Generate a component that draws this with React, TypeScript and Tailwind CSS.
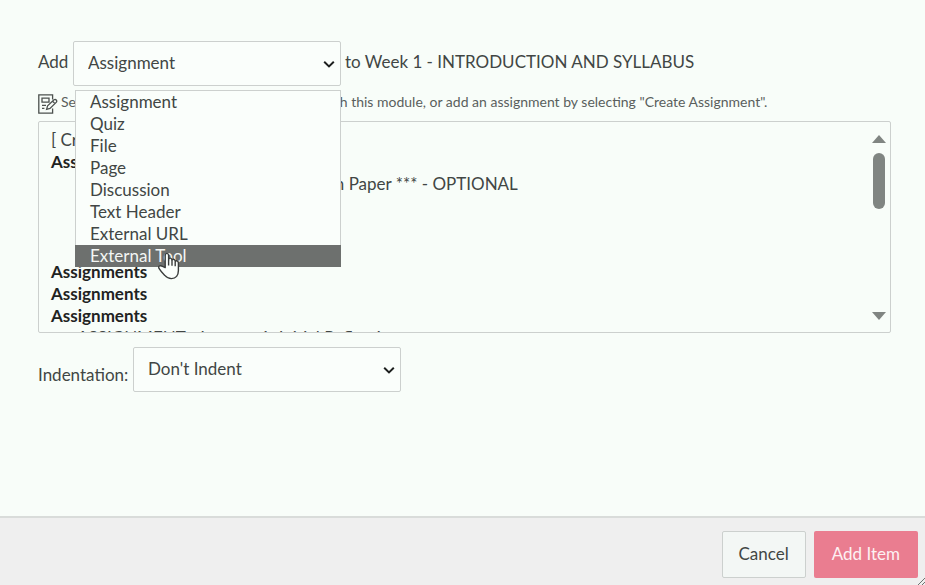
import { useState } from "react";

const itemTypes = [
  "Assignment",
  "Quiz",
  "File",
  "Page",
  "Discussion",
  "Text Header",
  "External URL",
  "External Tool",
];

const indents = ["Don't Indent", "Indent 1 Level", "Indent 2 Levels", "Indent 3 Levels"];

// Mock data for the assignment groups of the course
const groups = [
  {
    id: "group1",
    assignments: [
      "*** Extra Credit: Academic Research Paper *** - OPTIONAL",
      "Reading Response 1",
      "Reading Response 2",
      "Reading Response 3",
    ],
  },
  { id: "group2", assignments: [] },
  { id: "group3", assignments: [] },
  { id: "group4", assignments: ["ASSIGNMENT - Lecture 1: Initial Reflection"] },
];

function Chevron() {
  return (
    <svg
      className="pointer-events-none absolute right-1.5 top-1/2 h-3 w-3 -translate-y-1/2"
      viewBox="0 0 12 12"
      fill="none"
      stroke="#1c1f1e"
      strokeWidth="2"
      aria-hidden="true"
    >
      <path d="M1.2 3.8 L6 8.4 L10.8 3.8" />
    </svg>
  );
}

function AssignmentIcon() {
  return (
    <svg className="h-5 w-5 shrink-0" viewBox="0 0 20 20" fill="none" stroke="#4b504e" strokeWidth="1.3" aria-hidden="true">
      <path d="M14.6 5.4 V0.8 H0.8 V19.2 H14.6 V14.6" />
      <path d="M4 4.2 H11 V8.2 H4 Z M4 11.4 H8 M4 14.4 H6.4" />
      <path d="M8.6 15.4 L9.6 11.8 L16 5.8 Q17.4 5 18.4 6.2 Q19.2 7.4 18.2 8.4 L12 14.4 Z M14.6 7.2 L17 9.6" />
    </svg>
  );
}

function HandCursor() {
  return (
    <svg
      className="pointer-events-none absolute bottom-[-13px] left-[82px] h-7 w-6"
      viewBox="0 0 24 28"
      fill="#fbfffc"
      stroke="#3a3d3c"
      strokeWidth="1.4"
      strokeLinejoin="round"
      aria-hidden="true"
    >
      <path d="M8.2 15.6 V3.4 Q8.3 1.4 9.9 1.4 Q11.4 1.4 11.6 3.4 V8 Q11.8 6 13.4 6.1 Q14.9 6.3 15 8.4 Q15.4 7 16.7 7.2 Q18.2 7.4 18.2 9.6 Q18.8 8.5 20 8.8 Q21.4 9.3 21.4 11.2 V18.4 Q21.4 22 19.6 24.4 Q17.8 26.6 14.4 26.6 Q10.6 26.6 7.8 23.4 Q4.2 20 2 16.4 Q1.2 14.4 2.6 13.8 Q4 13.4 5.6 14.4 Z" />
      <path d="M11.6 8 V13.4 M15 8.6 V13.8 M18.2 10 V14.2" fill="none" />
    </svg>
  );
}

export default function App() {
  const [type, setType] = useState("Assignment");
  const [active, setActive] = useState("External Tool");
  const [open, setOpen] = useState(true);

  const pick = (name: string) => {
    setType(name);
    setOpen(false);
  };

  return (
    <form
      className="flex min-h-screen flex-col bg-[#f8fdf9] font-['Lato',sans-serif] text-[17px] leading-[22px] text-[#414644]"
      onSubmit={(e) => e.preventDefault()}
    >
      <main className="flex-1 pl-[38px] pr-[34px] pt-[41px]">
        <div className="flex items-center">
          <label htmlFor="item-type" className="w-[35px] shrink-0 pb-1">
            Add
          </label>
          <div className="relative w-[268px] shrink-0">
            <select
              id="item-type"
              value={type}
              onChange={(e) => setType(e.target.value)}
              className="block h-[45px] w-full appearance-none rounded-xs border border-[#ccd0ce] bg-[#fafefb] px-3.5 pb-0.5"
            >
              {itemTypes.map((name) => (
                <option key={name}>{name}</option>
              ))}
            </select>
            <Chevron />
            {open && (
              <ul
                role="listbox"
                aria-label="Item types"
                className="absolute left-0.5 right-0 top-[49px] z-10 border border-b-0 border-[#ccd0ce] bg-[#fafefb]"
              >
                {itemTypes.map((name) => (
                  <li
                    key={name}
                    role="option"
                    aria-selected={name === active}
                    onMouseEnter={() => setActive(name)}
                    onClick={() => pick(name)}
                    className={
                      name === active
                        ? "relative -mx-px bg-[#6d706e] pl-[15px] text-[#f3f6f4]"
                        : "px-3.5"
                    }
                  >
                    {name}
                    {name === active && <HandCursor />}
                  </li>
                ))}
              </ul>
            )}
          </div>
          <span className="ml-1 pb-1">to Week 1 - INTRODUCTION AND SYLLABUS</span>
        </div>

        <div className="mt-2 flex items-center gap-[3px] whitespace-nowrap">
          <AssignmentIcon />
          <label htmlFor="assignments" className="mb-1 text-sm leading-4 text-[#5a5f5d]">
            Select an assignment you want associated with this module, or add an assignment by
            selecting "Create Assignment".
          </label>
        </div>

        <div className="mt-[7px] flex h-[212px] rounded-xs border border-[#ccd0ce] pt-[7px]">
          <select
            id="assignments"
            size={10}
            className="h-full min-w-0 flex-1 appearance-none overflow-hidden bg-transparent pl-3 outline-none [scrollbar-width:none]"
          >
            <option className="h-[22px] min-h-0 p-0">[ Create Assignment ]</option>
            {groups.map((group) => (
              <optgroup
                key={group.id}
                label="Assignments"
                className="-ml-0.5 p-0 font-bold leading-[21px] text-[#1f2322]"
              >
                {group.assignments.map((title) => (
                  <option
                    key={title}
                    className="h-[22px] min-h-0 p-0 pl-7 font-normal leading-[22px] text-[#414644]"
                  >
                    {title}
                  </option>
                ))}
              </optgroup>
            ))}
          </select>
          <div className="flex w-[22px] flex-col items-center pb-3 pt-1.5" aria-hidden="true">
            <svg className="h-2 w-3.5" viewBox="0 0 14 8" fill="#808582">
              <path d="M0 8 L7 0 L14 8 Z" />
            </svg>
            <div className="mt-2.5 h-14 w-3 rounded-full bg-[#808582]" />
            <svg className="mt-auto h-2 w-3.5" viewBox="0 0 14 8" fill="#808582">
              <path d="M0 0 H14 L7 8 Z" />
            </svg>
          </div>
        </div>

        <div className="mt-3.5 flex items-center">
          <label htmlFor="indent" className="w-[95px] shrink-0 pt-2.5">
            Indentation:
          </label>
          <div className="relative w-[268px]">
            <select
              id="indent"
              className="block h-[45px] w-full appearance-none rounded-xs border border-[#ccd0ce] bg-[#fafefb] px-3.5 pb-0.5"
            >
              {indents.map((name) => (
                <option key={name}>{name}</option>
              ))}
            </select>
            <Chevron />
          </div>
        </div>
      </main>

      <footer className="relative flex justify-end gap-2 border-t-2 border-[#d9dcda] bg-[#efefef] pb-[7px] pl-4 pr-[7px] pt-[13px]">
        <button
          type="button"
          className="h-[47px] rounded-xs border border-[#ccd0ce] bg-[#f3f7f5] px-4 pb-0.5"
        >
          Cancel
        </button>
        <button type="submit" className="h-[47px] rounded-xs bg-[#ea7d90] px-[18px] pb-0.5 text-[#fdf1f3]">
          Add Item
        </button>
        <svg className="absolute bottom-0 right-0 h-2 w-2" viewBox="0 0 8 8" stroke="#6f7371" aria-hidden="true">
          <path d="M1 8 L8 1 M5 8 L8 5" />
        </svg>
      </footer>
    </form>
  );
}
